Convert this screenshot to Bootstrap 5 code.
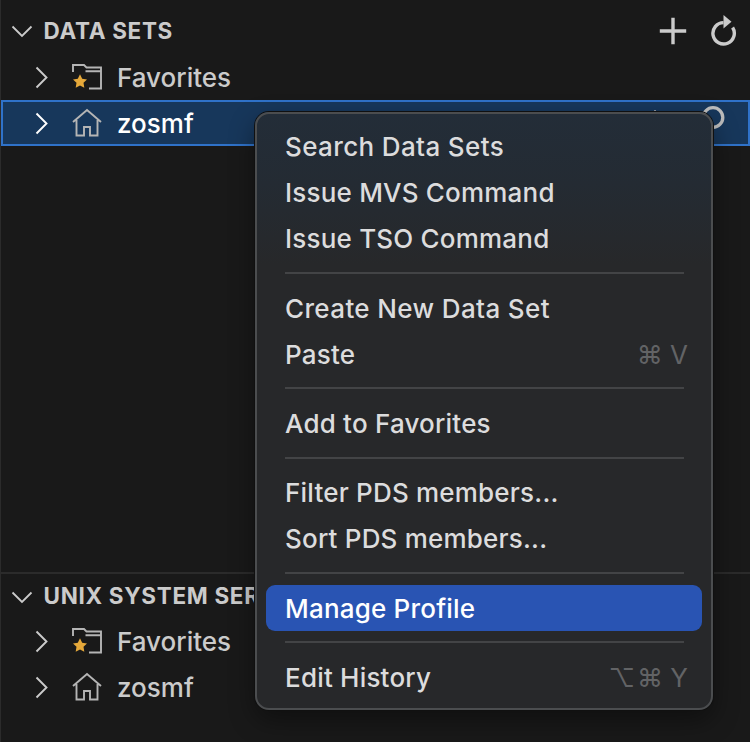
<!DOCTYPE html>
<html lang="en" data-bs-theme="dark">
<head>
<meta charset="utf-8">
<meta name="viewport" content="width=device-width, initial-scale=1">
<title>Data Sets</title>
<link href="https://cdn.jsdelivr.net/npm/bootstrap@5.3.0/dist/css/bootstrap.min.css" rel="stylesheet">
<style>
  body { background: #191919; color: #cbcbcb; font-family: Inter, "Liberation Sans", sans-serif; font-size: 26px; line-height: 1; }
  .explorer { width: 750px; height: 742px; box-shadow: inset 1px 0 #2b2b2b; }
  .pane-first { height: 572px; padding-top: 8px; }
  .pane-second { border-top: 2px solid #2b2b2b; }
  .pane-head { height: 46px; padding: 0 13px 0 10px; font-size: 22.5px; font-weight: 700; }
  .pane-second .pane-head { height: 44px; padding-top: 1px; }
  .pane-title { margin-left: 9.500px; letter-spacing: .68px; }
  .actions { gap: 22px; }
  .tree-row { height: 46px; padding: 0 12px 0 31px; margin-left: 1px; border: 2px solid transparent; }
  .tree-row.picked { background: #17375b; border-color: #2f72c9; color: #fff; }
  .tree-row span { padding-top: 2px; font-weight: 450; }
  .twist { width: 16px; height: 24px; }
  .kind { width: 32px; height: 30px; margin: 0 14px 0 21px; color: #b5b5b5; }
  .row-actions { gap: 31px; margin-right: 11.500px; color: #bdbdbd; }
  .ctx { left: 255px; top: 112px; width: 458px; height: 598px; padding: 9px; border: 2px solid #4b4d4f; border-radius: 14px; color: #dcdcdd;
    background: linear-gradient(#232d38 0, #242b33 70px, #27282a 150px, #27282a 100%); box-shadow: 0 0 0 1px #101010, 0 10px 26px rgba(0,0,0,.4); }
  .ctx .dropdown-item { height: 46.15px; padding: 2px 14px 0 19px; color: inherit; border-radius: 9px; font-weight: 500; letter-spacing: .2px; }
  .ctx .dropdown-item.loose { letter-spacing: .37px; }
  .ctx .dropdown-item.active { background: #2954b3; color: #fff; }
  .ctx .dropdown-divider { height: 2px; margin: 10.55px 18px 10.55px 19px; border: 0; background: #434446; opacity: 1; }
  .keys { color: #626365; font-weight: 400; letter-spacing: 0; }
  .opt { letter-spacing: 2px; }
</style>
<script src="https://cdn.jsdelivr.net/npm/bootstrap@5.3.0/dist/js/bootstrap.bundle.min.js"></script>
</head>
<body class="overflow-hidden">
<svg class="d-none">
  <symbol id="down" viewBox="0 0 24 16"><path d="M2.500 3.500 12 13l9.500-9.500" fill="none" stroke="currentColor" stroke-width="1.800"/></symbol>
  <symbol id="right" viewBox="0 0 16 24"><path d="M2.500 2.500 12.500 12.500l-10 10" fill="none" stroke="currentColor" stroke-width="1.900"/></symbol>
  <symbol id="folder" viewBox="0 0 32 30">
    <path d="M2 10V3h11l2.500 2.500H30V26.500H18M14.500 9.300H30" fill="none" stroke="currentColor" stroke-width="1.900"/>
    <path d="m9 12.300 2.200 4.400 4.800.7-3.500 3.400.8 4.900L9 23.400l-4.300 2.300.8-4.900L2 17.400l4.800-.7z" fill="#e5a83a"/>
  </symbol>
  <symbol id="home" viewBox="0 0 32 30"><path d="M2 14 16 2l14 12M5.500 12v15.500h7.500v-8.500h6v8.500h7.500V12" fill="none" stroke="currentColor" stroke-width="1.900"/></symbol>
  <symbol id="plus" viewBox="0 0 28 28"><path d="M14 .800v26.400M.800 14h26.400" stroke="currentColor" stroke-width="3.400"/></symbol>
  <symbol id="reload" viewBox="0 0 28 32"><path d="M23.600 12.500A10.700 10.700 0 1 1 14.500 7.600" fill="none" stroke="currentColor" stroke-width="3.400"/><path d="M14.500 0v13.500l8-6.800z" fill="currentColor"/></symbol>
  <symbol id="star" viewBox="0 0 26 26"><path d="m13 1.500 3.300 7.700 7.700.9-5.700 5.300 1.500 7.700-6.800-3.800-6.800 3.800 1.500-7.700L2 10.100l7.700-.9z" fill="none" stroke="currentColor" stroke-width="2"/></symbol>
  <symbol id="search" viewBox="0 0 26 34"><circle cx="14" cy="11.500" r="9.800" fill="none" stroke="currentColor" stroke-width="3.300"/><path d="M8 20 1.500 28" stroke="currentColor" stroke-width="3.300"/></symbol>
</svg>
<main class="explorer position-relative overflow-hidden">
  <section class="pane-first">
    <header class="pane-head d-flex align-items-center">
      <svg width="24" height="16"><use href="#down"/></svg><span class="pane-title">DATA SETS</span>
      <div class="actions d-flex align-items-center ms-auto">
        <svg width="28" height="28"><use href="#plus"/></svg>
        <svg width="28" height="32"><use href="#reload"/></svg>
      </div>
    </header>
    <div class="tree-row d-flex align-items-center"><svg class="twist"><use href="#right"/></svg><svg class="kind"><use href="#folder"/></svg><span>Favorites</span></div>
    <div class="tree-row picked d-flex align-items-center"><svg class="twist"><use href="#right"/></svg><svg class="kind"><use href="#home"/></svg><span>zosmf</span>
      <div class="row-actions d-flex align-items-center ms-auto">
        <svg width="26" height="26"><use href="#star"/></svg>
        <svg width="26" height="34"><use href="#search"/></svg>
      </div>
    </div>
  </section>
  <section class="pane-second">
    <header class="pane-head d-flex align-items-center"><svg width="24" height="16"><use href="#down"/></svg><span class="pane-title text-nowrap">UNIX SYSTEM SER</span></header>
    <div class="tree-row d-flex align-items-center"><svg class="twist"><use href="#right"/></svg><svg class="kind"><use href="#folder"/></svg><span>Favorites</span></div>
    <div class="tree-row d-flex align-items-center"><svg class="twist"><use href="#right"/></svg><svg class="kind"><use href="#home"/></svg><span>zosmf</span></div>
  </section>
  <div class="ctx position-absolute">
    <a class="dropdown-item loose d-flex align-items-center">Search Data Sets</a>
    <a class="dropdown-item d-flex align-items-center">Issue MVS Command</a>
    <a class="dropdown-item d-flex align-items-center">Issue TSO Command</a>
    <hr class="dropdown-divider">
    <a class="dropdown-item loose d-flex align-items-center">Create New Data Set</a>
    <a class="dropdown-item d-flex align-items-center">Paste<span class="keys ms-auto">⌘ V</span></a>
    <hr class="dropdown-divider">
    <a class="dropdown-item d-flex align-items-center">Add to Favorites</a>
    <hr class="dropdown-divider">
    <a class="dropdown-item d-flex align-items-center">Filter PDS members...</a>
    <a class="dropdown-item d-flex align-items-center">Sort PDS members...</a>
    <hr class="dropdown-divider">
    <a class="dropdown-item active d-flex align-items-center">Manage Profile</a>
    <hr class="dropdown-divider">
    <a class="dropdown-item d-flex align-items-center">Edit History<span class="keys ms-auto"><span class="opt">⌥</span>⌘ Y</span></a>
  </div>
</main>
</body>
</html>
